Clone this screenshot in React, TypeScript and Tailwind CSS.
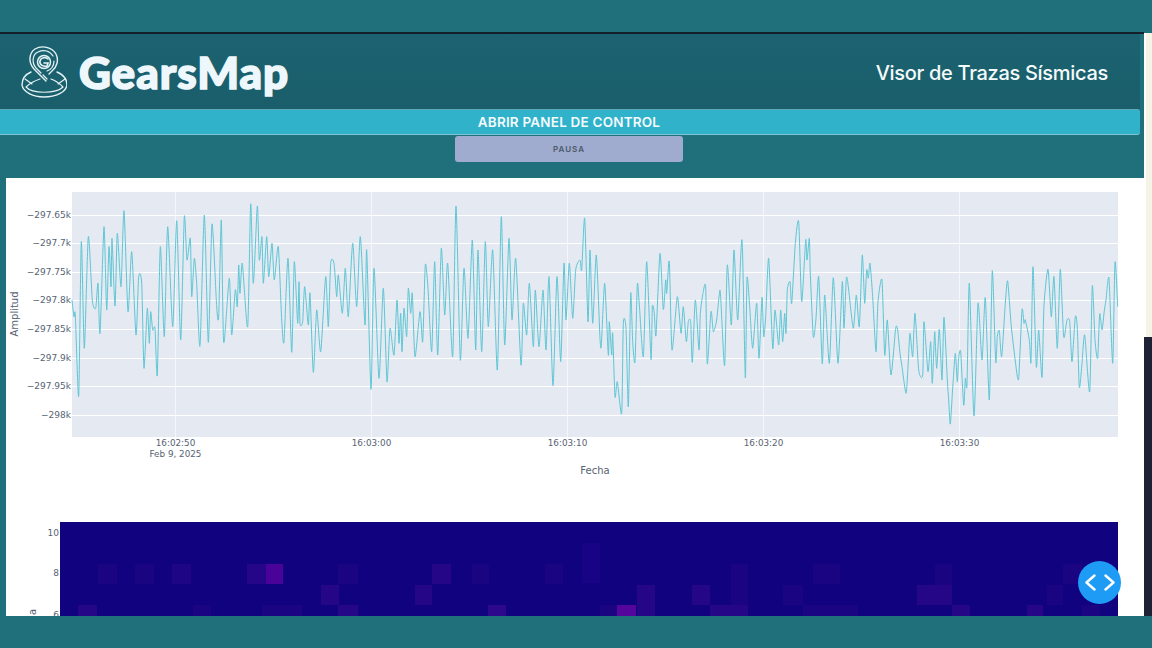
import React from 'react';

const FONT_TICK = '"DejaVu Sans", sans-serif';

// trace points read off the plot: [x offset, then x,y pairs at 3x zoom]
const SEGMENTS: Array<[number, number[]]> = [
  [0, [216,360,222,410,226,405,236,648,244,185,253,505,265,170,277,360,287,385,294,310,300,460,312,140,320,390,327,200,333,320,336,175,345,378,352,160,363,320,372,92,384,395,395,215,408,465,416,290,425,310,432,565,442,385,448,490,452,395,458,450,465,445,472,585,481,200,493,470,503,140,518,440,530,122,542,480,553,110,561,240,571,175,575,350,583,235,590,310,600,497,613,105,625,487,636,132,650,380,656,408,664,120,671,487,688,295,695,465,706,330,712,380,716,255,720,340,727,250,743,440,752,72,760,310,772,78,778,240,786,170,790,310,800,170,806,290,816,190,823,300,835,200,845,420,852,485,864,235,875,517,883,245,893,430,897,305,900,430]],
  [300, [8,425,14,320,25,435,30,340,40,577,50,390,62,515,77,290,85,440,92,250,102,250,110,350,115,285,127,400,136,265,145,410,158,190,170,380,181,170,195,435,200,210,213,628,222,265,237,595,250,325,261,605,270,445,282,525,291,360,297,490,302,400,306,515,312,385,320,470,325,325,332,400,337,340,345,530,360,395,368,485,376,255,384,325,395,515,404,245,413,525,424,205,434,405,443,250,458,530,468,78,481,540,492,265,504,475,517,180,527,510,534,210,545,515,556,185,565,440,578,210,592,570,604,110,614,495,627,175,636,420,647,235,663,555,670,370,680,465,688,310,700,500,706,330,717,500,729,330,738,510,747,290,759,617,771,290,782,545,792,250,798,420,808,250,818,415,827,270,840,240,845,270,854,115,864,425,870,210,878,430,889,225,900,475]],
  [600, [4,495,14,310,25,525,28,425,35,525,38,460,45,650,52,605,65,700,70,430,78,445,85,680,92,340,98,485,105,545,112,315,117,360,130,530,140,245,153,538,157,380,163,400,168,465,180,220,190,388,197,300,200,340,208,245,216,510,232,350,243,460,250,380,259,485,265,425,272,425,277,547,286,360,297,510,301,400,309,340,317,320,322,552,333,395,340,455,350,420,360,330,366,430,374,555,382,255,394,435,402,210,413,420,426,180,436,593,441,295,449,380,458,505,470,370,477,535,486,352,491,470,497,410,506,235,518,505,525,390,536,495,542,390,548,485,554,400,558,460,562,330,570,305,575,370,586,190,596,125,605,365,617,180,621,240,628,175,631,280,640,470,648,415,656,290,667,552,674,345,688,550,700,293,714,550,727,305,732,445,739,295,745,320,760,445,769,345,778,440,787,225,794,370,800,270,805,295,810,250,818,350,828,515,834,365,846,300,854,525,862,420,873,585,887,445,893,450,900,520]],
  [852, [150,560,162,640,168,560,174,460,182,530,189,400,200,570,212,585,216,425,228,575,236,485,241,610,248,455,254,565,262,448,270,600,276,412,286,600,290,660,295,732,303,610,310,520,316,605,320,535,326,515,335,675,340,595,345,615,352,310,366,708,378,370,390,540,400,353,412,660,421,272,431,545,436,470,442,452,449,530,460,370,467,303,478,440,492,560,500,595,510,390,516,430,520,420,532,480,537,545,543,260,553,560,560,450,570,592,576,375,588,268,598,410,606,290,616,505,625,268,635,470,645,420,653,425,660,545,670,410,676,445,682,622,690,550,698,465,713,635,721,318,729,480,737,535,743,402,750,450,756,400,762,360,771,295,782,550,789,247,797,380]],
];

const tracePts: Array<[number, number]> = [];
SEGMENTS.forEach(([offset, pts]) => {
  for (let i = 0; i < pts.length; i += 2) {
    tracePts.push([offset + pts[i] / 3, 180 + pts[i + 1] / 3]);
  }
});

// rounded line through the points, peaks stay where they were read
const tracePath = tracePts
  .map((p, i) => {
    if (i === 0) return `M${p[0].toFixed(1)} ${p[1].toFixed(1)}`;
    const p0 = tracePts[Math.max(i - 2, 0)];
    const p1 = tracePts[i - 1];
    const p3 = tracePts[Math.min(i + 1, tracePts.length - 1)];
    const k = 9;
    const c1x = p1[0] + (p[0] - p0[0]) / k;
    const c1y = p1[1] + (p[1] - p0[1]) / k;
    const c2x = p[0] - (p3[0] - p1[0]) / k;
    const c2y = p[1] - (p3[1] - p1[1]) / k;
    return `C${c1x.toFixed(1)} ${c1y.toFixed(1)} ${c2x.toFixed(1)} ${c2y.toFixed(1)} ${p[0].toFixed(1)} ${p[1].toFixed(1)}`;
  })
  .join('');

const Y_TICKS: Array<[number, string]> = [
  [215, '−297.65k'],
  [243, '−297.7k'],
  [272, '−297.75k'],
  [300, '−297.8k'],
  [329, '−297.85k'],
  [358, '−297.9k'],
  [386, '−297.95k'],
  [415, '−298k'],
];

const X_TICKS: Array<[number, string]> = [
  [175, '16:02:50'],
  [371, '16:03:00'],
  [567, '16:03:10'],
  [763, '16:03:20'],
  [959, '16:03:30'],
];

const FAINT = '#1a0482';
const MID = '#240686';

// x, y, w, h, colour
const CELLS: Array<[number, number, number, number, string]> = [
  [98, 564, 19, 20, FAINT], [135, 564, 19, 20, FAINT], [172, 564, 19, 20, '#1e0585'],
  [247, 564, 19, 20, '#260688'], [266, 564, 17, 20, '#4a0398'], [338, 564, 20, 20, FAINT],
  [321, 585, 18, 20, MID], [338, 605, 20, 11, MID], [78, 605, 19, 11, MID],
  [193, 605, 18, 11, FAINT], [262, 605, 40, 11, FAINT],
  [432, 564, 19, 20, MID], [415, 585, 17, 20, MID], [472, 564, 17, 20, FAINT],
  [488, 605, 18, 11, '#2e088c'], [545, 564, 18, 20, FAINT], [582, 543, 18, 40, '#170383'],
  [600, 605, 17, 11, FAINT], [617, 605, 19, 11, '#54059c'], [637, 585, 18, 31, MID],
  [692, 585, 18, 20, MID], [710, 605, 38, 11, MID], [731, 564, 17, 41, FAINT],
  [783, 585, 20, 20, FAINT], [813, 564, 27, 20, FAINT], [917, 585, 35, 20, MID],
  [935, 564, 17, 21, FAINT], [952, 605, 18, 11, MID], [803, 605, 55, 11, FAINT],
  [1027, 605, 16, 11, MID], [1047, 585, 16, 20, FAINT], [1063, 564, 19, 20, FAINT],
  [1082, 605, 18, 11, FAINT],
];

const GearsLogo: React.FC = () => (
  <svg width="46" height="52" viewBox="21 46 46 52" fill="none" stroke="#e4f2f5" strokeWidth="1.2" strokeLinecap="round" className="shrink-0">
    {/* base ring */}
    <path d="M31 72 C24 75 22 81 22 85 C23 92 33 97 44 97 C56 97 66 92 67 85 C67 80 64 75 57 72" strokeWidth="1.400" />
    <path d="M26 87 C31 82 37 80 40 79 M63 87 C58 82 54 80 51 79 M26 87 C32 94 56 94 63 87" />
    <path d="M25 79 L32 84 M65 79 L58 84" />
    {/* pin with maze rings */}
    <path d="M46 81 L34 69 C28 62 29 53 35 49 C42 45 52 47 56 54 C59 60 57 67 52 71 L49 74" strokeWidth="1.400" />
    <path d="M41 73 L36 68 C31 62 33 54 38 52 C44 49 50 51 53 56 M54 61 C54 66 51 70 47 71 M43 75 L47 79" />
    <circle cx="44" cy="62" r="6.500" strokeWidth="1.500" />
    <path d="M48 59 C46 57 41 57 40 61 C39 65 44 67 47 66 L48 63 H44" strokeWidth="1.600" />
  </svg>
);

const TraceChart: React.FC = () => (
  <svg width="1138" height="344" viewBox="6 178 1138 344" className="block shrink-0" style={{ fontFamily: FONT_TICK }}>
    <rect x="72" y="192" width="1046" height="245" fill="#e5e9f2" />
    {Y_TICKS.map(([y]) => (
      <line key={y} x1="72" x2="1118" y1={y + 0.5} y2={y + 0.5} stroke="#ffffff" strokeWidth="1" />
    ))}
    {X_TICKS.map(([x]) => (
      <line key={x} x1={x + 0.5} x2={x + 0.5} y1="192" y2="437" stroke="#ffffff" strokeOpacity="0.6" strokeWidth="1" />
    ))}
    <path d={tracePath} fill="none" stroke="#5cc6d4" strokeWidth="1" strokeLinejoin="round" />
    <g fill="#566373" fontSize="9">
      {Y_TICKS.map(([y, label]) => (
        <text key={y} x="71" y={y + 3} textAnchor="end">{label}</text>
      ))}
    </g>
    <g fill="#566373" fontSize="8.800">
      {X_TICKS.map(([x, label]) => (
        <text key={x} x={x + 0.5} y="446" textAnchor="middle">{label}</text>
      ))}
      <text x="175.500" y="457" textAnchor="middle">Feb 9, 2025</text>
    </g>
    <g fill="#566373" fontSize="10">
      <text x="595" y="474" textAnchor="middle">Fecha</text>
      <text x="18" y="314" textAnchor="middle" transform="rotate(-90 18 314)">Amplitud</text>
    </g>
  </svg>
);

const HeatChart: React.FC = () => (
  <svg width="1138" height="94" viewBox="6 522 1138 94" className="block shrink-0" style={{ fontFamily: FONT_TICK }}>
    <rect x="60" y="522" width="1058" height="94" fill="#11027f" />
    {CELLS.map(([x, y, w, h, c], i) => (
      <rect key={i} x={x} y={y} width={w} height={h} fill={c} />
    ))}
    <g fill="#566373" fontSize="9">
      <text x="59" y="536" textAnchor="end">10</text>
      <text x="59" y="576" textAnchor="end">8</text>
      <text x="59" y="618" textAnchor="end">6</text>
    </g>
    <text x="36" y="612" fill="#566373" fontSize="10" textAnchor="middle" transform="rotate(-90 36 612)">a</text>
  </svg>
);

const App: React.FC = () => {
  return (
    <div className="relative flex flex-col w-[1152px] h-[648px] overflow-hidden bg-[#20707c] font-['Inter',sans-serif]">
      <div className="h-[32px] shrink-0 bg-[#20707c]" />

      <div className="flex flex-1 min-h-0">
        <main className="flex flex-col w-[1144px] shrink-0 border-t-2 border-[#13202c]">
          {/* Header row */}
          <header className="flex items-center justify-between h-[75px] shrink-0 w-[1140px] pl-[21px] pr-[32px] bg-gradient-to-b from-[#1c6270] to-[#1a5e6b]">
            <div className="flex items-center gap-[12px]">
              <GearsLogo />
              <span className="font-['Lato',sans-serif] text-[44px] leading-none font-black tracking-[1px] text-[#eef7fb] [-webkit-text-stroke:1.6px_#eef7fb]">GearsMap</span>
            </div>
            <span className="mt-[2px] text-[20px] font-medium tracking-[-0.3px] text-[#f4fafa]">Visor de Trazas Sísmicas</span>
          </header>

          <button className="flex items-center justify-center h-[26px] shrink-0 w-[1140px] pr-[2px] rounded-r-[3px] border-t border-b border-t-[#5ba9b5] border-b-[#7cc6d3] bg-[#30b2ca] text-[13.5px] font-semibold tracking-[0.2px] text-[#f5fbfd]">
            ABRIR PANEL DE CONTROL
          </button>

          <div className="flex h-[43px] shrink-0 pt-px pl-[455px] bg-[#20707c]">
            <button className="w-[228px] h-[26px] rounded-[3px] bg-[#9fabcf] text-[8px] font-semibold tracking-[1px] text-[#4c5a6a]">
              PAUSA
            </button>
          </div>

          <section className="flex flex-col flex-1 min-h-0 ml-[6px] bg-white overflow-hidden">
            <TraceChart />
            <HeatChart />
          </section>
        </main>

        <aside className="flex flex-col flex-1 min-w-0 mt-px">
          <div className="h-[304px] shrink-0 border-l-2 border-white bg-[#f5f2e6]" />
          <div className="flex-1 bg-[#1e2235]" />
        </aside>
      </div>

      <div className="h-[32px] shrink-0 bg-[#20707c]" />

      <button className="absolute left-[1078px] top-[561px] flex items-center justify-center w-[43px] h-[43px] rounded-full bg-[#1e9bf5]">
        <svg width="30" height="17" viewBox="0 0 30 17" fill="none" stroke="#ffffff" strokeWidth="2.400" strokeLinecap="round" strokeLinejoin="round">
          <path d="M9.500 1.500 L1.500 8.500 L9.500 15.500" />
          <path d="M20.500 1.500 L28.500 8.500 L20.500 15.500" />
        </svg>
      </button>
    </div>
  );
};

export default App;
